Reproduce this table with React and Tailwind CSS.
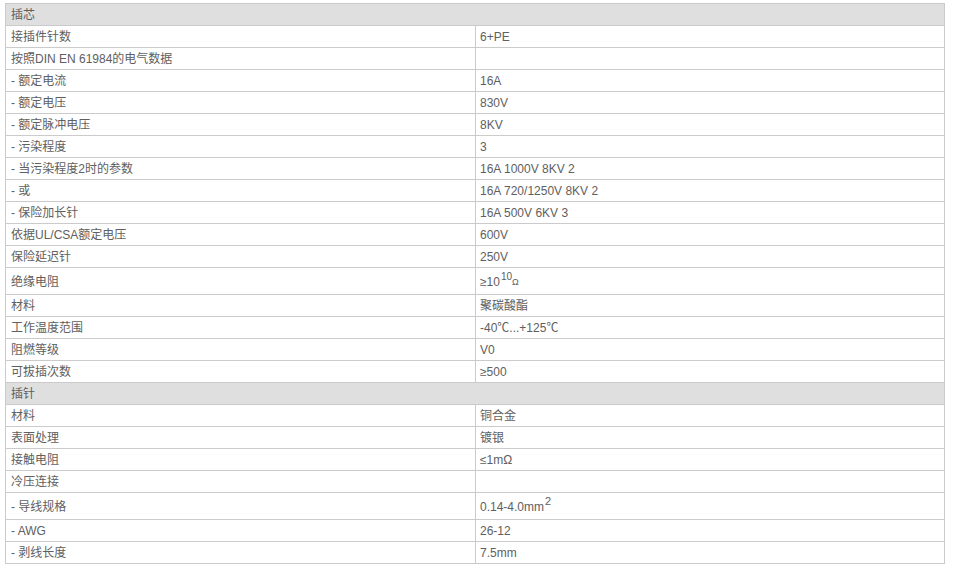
import React from "react";

const rows = [
  { h: "插芯" },
  { l: "接插件针数", r: "6+PE" },
  { l: "按照DIN EN 61984的电气数据", r: "" },
  { l: "- 额定电流", r: "16A" },
  { l: "- 额定电压", r: "830V" },
  { l: "- 额定脉冲电压", r: "8KV" },
  { l: "- 污染程度", r: "3" },
  { l: "- 当污染程度2时的参数", r: "16A 1000V 8KV 2" },
  { l: "- 或", r: "16A 720/1250V 8KV 2" },
  { l: "- 保险加长针", r: "16A 500V 6KV 3" },
  { l: "依据UL/CSA额定电压", r: "600V" },
  { l: "保险延迟针", r: "250V" },
  { l: "绝缘电阻", r: "ohm", tall: true },
  { l: "材料", r: "聚碳酸酯" },
  { l: "工作温度范围", r: "-40℃...+125℃" },
  { l: "阻燃等级", r: "V0" },
  { l: "可拔插次数", r: "≥500" },
  { h: "插针" },
  { l: "材料", r: "铜合金" },
  { l: "表面处理", r: "镀银" },
  { l: "接触电阻", r: "≤1mΩ" },
  { l: "冷压连接", r: "" },
  { l: "- 导线规格", r: "mm2", tall: true },
  { l: "- AWG", r: "26-12" },
  { l: "- 剥线长度", r: "7.5mm" },
];

function RightContent({ r }) {
  if (r === "ohm") {
    return (
      <span className="inline-flex items-end">
        <span>≥10</span>
        <span className="text-[10px] relative -top-[6px] leading-none ml-[1px]">10</span>
        <span className="text-[9px] leading-none mb-[1px]">Ω</span>
      </span>
    );
  }
  if (r === "mm2") {
    return (
      <span className="inline-flex items-end">
        <span>0.14-4.0mm</span>
        <span className="text-[11px] relative -top-[6px] leading-none ml-[1px]">2</span>
      </span>
    );
  }
  return <span>{r}</span>;
}

export default function App() {
  return (
    <div className="bg-white w-[954px] h-[575px] pt-[3px] pl-[5px]" style={{ fontFamily: '"Liberation Sans", "Noto Sans CJK SC", sans-serif' }}>
      <div className="w-[940px] border border-[#cbcbcb] text-[12px] text-[#606060] leading-none">
        {rows.map((row, i) => {
          const first = i === 0;
          const hCls = row.tall
            ? "h-[27px]"
            : first
            ? "h-[21px]"
            : "h-[22px]";
          const bCls = first ? "" : "border-t border-[#cbcbcb]";
          if (row.h) {
            return (
              <div key={i} className={`${hCls} ${bCls} bg-[#dfdfdf] flex items-center pl-[5px] pt-[1px]`}>
                {row.h}
              </div>
            );
          }
          return (
            <div key={i} className={`${hCls} ${bCls} flex`}>
              <div className="w-[469px] flex items-center pl-[5px] pt-[1px] whitespace-nowrap">{row.l}</div>
              <div className="flex-1 border-l border-[#cbcbcb] flex items-center pl-[4px] pt-[1px] whitespace-nowrap">
                <RightContent r={row.r} />
              </div>
            </div>
          );
        })}
      </div>
    </div>
  );
}
